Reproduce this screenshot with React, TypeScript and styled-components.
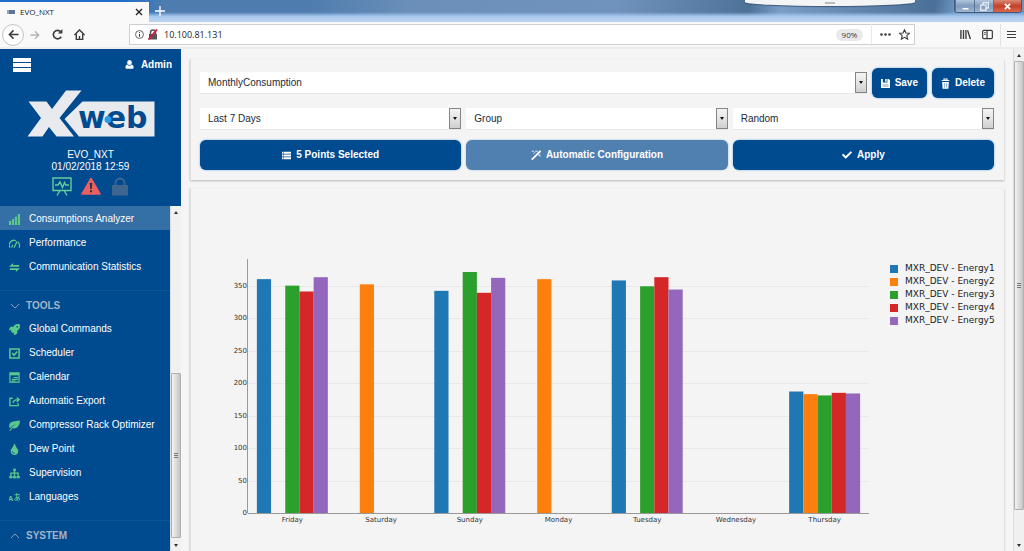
import React from 'react';
import styled, { createGlobalStyle } from 'styled-components';
import { FaCheck, FaRocket, FaTint } from 'react-icons/fa';

const navy = '#004a8f';
const green = '#5cc98c';
const uiFont = '"Liberation Sans", Arial, sans-serif';
const browserFont = '"Open Sans", "Noto Sans", sans-serif';
const chartFont = '"DejaVu Sans", Verdana, sans-serif';

const GlobalStyle = createGlobalStyle`
  *, *::before, *::after { box-sizing: border-box; }
  body { margin: 0; background: #f4f4f4; }
  button, select, input { font: inherit; margin: 0; }
  svg { display: block; flex: none; }
`;

const Window = styled.div`
  display: flex;
  flex-direction: column;
  height: 100vh;
  overflow: hidden;
  font: 10px/12px ${uiFont};
  color: #222;
`;

/* ---------- browser frame ---------- */

const TitleBar = styled.header`
  position: relative;
  display: flex;
  align-items: flex-end;
  flex: none;
  height: 22px;
  background:
    linear-gradient(to bottom, transparent 55%, #a9cbf2 75%, #bdd2ec),
    linear-gradient(100deg, #1f6fc9 0 12%, #4f7cae 16% 30%, #6a8fb9 40%, #7093bd 60%, #4d7197 73%, #7a9dc6 76%, #4a7098 91%, #6c94c0 93%);
`;

const Tab = styled.div`
  display: flex;
  align-items: center;
  gap: 5px;
  width: 149px;
  height: 20px;
  padding: 0 6px 0 7px;
  background: #f9f9fa;
  font: 8px/12px ${browserFont};
`;

const Favicon = styled.span`
  width: 8px;
  height: 4px;
  background: linear-gradient(90deg, #9aa6b8 30%, #5d7698 30%);
`;

const PlainButton = styled.button`
  display: flex;
  align-items: center;
  justify-content: center;
  padding: 0;
  border: 0;
  background: none;
  color: inherit;
`;

const TabClose = styled(PlainButton)`
  margin-left: auto;
`;

const NewTab = styled(PlainButton)`
  width: 22px;
  height: 22px;
  color: #fff;
`;

const WindowControls = styled.div`
  display: flex;
  align-self: flex-start;
  margin-left: auto;
  margin-right: 2px;
  border: 1px solid #40597a;
  border-top: 0;
  border-radius: 0 0 4px 4px;
  overflow: hidden;
`;

const WindowButton = styled(PlainButton)<{ $close?: boolean }>`
  width: ${p => (p.$close ? 28 : 19)}px;
  height: 12px;
  color: #fff;
  border-left: 1px solid #5a7595;
  background: ${p =>
    p.$close
      ? 'linear-gradient(#d98a78, #c2402a 50%, #d9694c)'
      : 'linear-gradient(#b3c5db, #7f9abb 50%, #9db6d3)'};
`;

const SessionHandle = styled.div`
  position: absolute;
  top: 0;
  right: 109px;
  width: 170px;
  height: 6px;
  border-radius: 0 0 50% 50% / 0 0 4px 4px;
  background: #f2f4f6;
  box-shadow: 0 1px 1px #40597a;
  &::after {
    content: '';
    display: block;
    width: 10px;
    height: 2px;
    margin: 2px auto 0;
    background: #b9bdc2;
  }
`;

const Toolbar = styled.div`
  display: flex;
  align-items: center;
  flex: none;
  height: 27px;
  padding: 0 2px;
  background: #f9f9fa;
  border-bottom: 2px solid #ececec;
  color: #3b3b3d;
`;

const ToolButton = styled(PlainButton)`
  width: 22px;
  height: 22px;
`;

const BackButton = styled(ToolButton)`
  border: 1px solid #c4c4c6;
  border-radius: 50%;
  background: #fdfdfd;
`;

const AddressBar = styled.div`
  display: flex;
  align-items: center;
  flex: 1;
  height: 21px;
  margin: 0 39px;
  padding: 0 1px 0 5px;
  border: 1px solid #cfcfd1;
  background: #fff;
  font: 9px/12px ${browserFont};
`;

const AddressInput = styled.input`
  flex: 1;
  min-width: 0;
  padding: 0 0 0 6px;
  border: 0;
  background: none;
  color: #222;
  outline: 0;
`;

const ZoomLevel = styled.span`
  width: 27px;
  height: 12px;
  margin-right: 8px;
  border-radius: 6px;
  background: #e9e9eb;
  text-align: center;
  font-size: 8px;
`;

const AddressActions = styled.div`
  display: flex;
  align-items: center;
  gap: 1px;
  border-left: 1px solid #e8e8e8;
  padding-left: 4px;
  button { width: 18px; }
`;

const MenuButton = styled(ToolButton)`
  margin-left: 2px;
  border-left: 1px solid #e2e2e4;
`;

/* ---------- scroll bars ---------- */

const Track = styled.div`
  display: flex;
  flex-direction: column;
  flex: 0 0 11px;
  background: #f0f0f0;
  border-left: 1px solid #dcdcdc;
`;

const TrackArrow = styled.span<{ $down?: boolean }>`
  display: flex;
  align-items: center;
  justify-content: center;
  flex: 0 0 12px;
  &::before {
    content: '';
    border: 2px solid transparent;
    ${p => (p.$down ? 'border-top: 3px solid #333; border-bottom: 0;' : 'border-bottom: 3px solid #333; border-top: 0;')}
  }
`;

const TrackGap = styled.span<{ $share: number }>`
  flex: ${p => p.$share} 0 0;
`;

const Thumb = styled.span<{ $share: number }>`
  display: flex;
  align-items: center;
  justify-content: center;
  flex: ${p => p.$share} 0 0;
  border: 1px solid #b0b0b0;
  border-radius: 1px;
  background: linear-gradient(90deg, #f3f3f3, #dcdcdc 50%, #c3c3c3);
  &::before {
    content: '';
    width: 4px;
    height: 5px;
    background: repeating-linear-gradient(#777 0 1px, transparent 1px 2px);
  }
`;

const ScrollTrack = ({ before, thumb, after }: { before: number; thumb: number; after: number }) => (
  <Track aria-hidden="true">
    <TrackArrow />
    <TrackGap $share={before} />
    <Thumb $share={thumb} />
    <TrackGap $share={after} />
    <TrackArrow $down />
  </Track>
);

/* ---------- side bar ---------- */

const Page = styled.div`
  display: flex;
  flex: 1;
  min-height: 0;
`;

const Sidebar = styled.aside`
  display: flex;
  flex-direction: column;
  flex: 0 0 181px;
  background: ${navy};
  color: #fff;
`;

const SidebarTop = styled.div`
  display: flex;
  align-items: center;
  justify-content: space-between;
  height: 31px;
  padding: 0 9px 0 13px;
`;

const UserLink = styled.a`
  display: flex;
  align-items: center;
  gap: 7px;
  color: #fff;
  font-weight: bold;
  text-decoration: none;
`;

const Identity = styled.div`
  display: flex;
  flex-direction: column;
  align-items: center;
  padding: 10px 0;
`;

const DeviceInfo = styled.div`
  margin: 12px 0 4px;
  text-align: center;
`;

const StatusIcons = styled.div`
  display: flex;
  gap: 9px;
`;

const MenuArea = styled.div`
  display: flex;
  flex: 1;
  min-height: 0;
`;

const Menu = styled.nav`
  flex: 1;
  min-width: 0;
  overflow: hidden;
`;

const MenuLink = styled.a<{ $active?: boolean }>`
  display: flex;
  align-items: center;
  gap: 9px;
  height: 24px;
  padding: 2px 0 0 9px;
  color: #fff;
  text-decoration: none;
  white-space: nowrap;
  background: ${p => (p.$active ? '#346fa6' : 'transparent')};
  svg { color: ${green}; }
`;

const MenuHeading = styled.h2`
  display: flex;
  align-items: center;
  gap: 6px;
  height: 26px;
  margin: 12px 0 0;
  padding: 4px 0 0 10px;
  border-top: 1px solid #0d5596;
  font-size: 10px;
  color: #a3b4c6;
`;

/* ---------- content ---------- */

const Main = styled.main`
  display: flex;
  flex-direction: column;
  gap: 8px;
  flex: 1;
  min-width: 0;
  padding: 10px 9px 0;
  background: #f5f5f5;
`;

const Card = styled.section`
  background: #f4f4f4;
  border-left: 1px solid #dedede;
  box-shadow: 0 1px 2px #b5b5b5;
`;

const FilterCard = styled(Card)`
  display: flex;
  flex-direction: column;
  gap: 10px;
  padding: 9px 10px 10px 9px;
`;

const PresetRow = styled.div`
  display: flex;
  align-items: center;
  gap: 5px;
`;

const ThreeColumns = styled.div`
  display: grid;
  grid-template-columns: repeat(3, 1fr);
  gap: 5px;
`;

const SelectBox = styled.div`
  display: grid;
  flex: 1;
  height: 22px;
  background: #fff;
  border-bottom: 1px solid #e6e6e6;
`;

const NativeSelect = styled.select`
  grid-area: 1 / 1;
  appearance: none;
  padding: 0 16px 0 8px;
  border: 0;
  border-radius: 0;
  background: none;
  color: #222b3a;
`;

const SelectArrow = styled.span`
  grid-area: 1 / 1;
  justify-self: end;
  display: flex;
  align-items: center;
  justify-content: center;
  width: 12px;
  border: 1px solid #858585;
  background: linear-gradient(#f4f4f4, #e4e4e4 50%, #cfcfcf);
  pointer-events: none;
  &::before {
    content: '';
    border: 2px solid transparent;
    border-top: 3px solid #111;
    border-bottom: 0;
  }
`;

const ActionButton = styled.button<{ $muted?: boolean }>`
  display: flex;
  align-items: center;
  justify-content: center;
  gap: 5px;
  height: 30px;
  padding: 0 9px;
  border: 0;
  border-radius: 6px;
  background: ${p => (p.$muted ? '#4f80b0' : navy)};
  box-shadow: 0 0 2px ${p => (p.$muted ? '#8fb4d6' : '#5b9bd4')};
  color: #fff;
  font-weight: bold;
`;

const ChartCard = styled(Card)`
  display: flex;
  flex: 1;
  min-height: 0;
  padding: 71px 0 0 57px;
`;

const Plot = styled.svg`
  flex: 1;
  min-width: 0;
  height: 275px;
  overflow: visible;
  font: 7px ${chartFont};
  fill: #333;
`;

const Legend = styled.ul`
  flex: 0 0 135px;
  margin: 0;
  padding: 3px 0 0 21px;
  list-style: none;
  font: 9px/13px ${chartFont};
  white-space: nowrap;
  li {
    display: flex;
    align-items: center;
    gap: 7px;
  }
`;

const Swatch = styled.span<{ $color: string }>`
  width: 8px;
  height: 8px;
  background: ${p => p.$color};
`;

/* ---------- icons ---------- */

const Stroke = ({ size, width = 1, children }: { size: number; width?: number; children: React.ReactNode }) => (
  <svg width={size} height={size} viewBox="0 0 12 12" fill="none" stroke="currentColor" strokeWidth={width}>
    {children}
  </svg>
);

const Solid = ({ size, children }: { size: number; children: React.ReactNode }) => (
  <svg width={size} height={size} viewBox="0 0 12 12" fill="currentColor">
    {children}
  </svg>
);

const StatsIcon = () => (
  <Solid size={11}>
    <path d="M0 7.500h2.300V12H0zM3.200 5.500h2.300V12H3.200zM6.400 3h2.300v9H6.400zM9.600 0H12v12H9.600z" />
  </Solid>
);
const GaugeIcon = () => (
  <Stroke size={11} width={1.4}>
    <path d="M1 10.500A5.200 5.200 0 0 1 7.500 3M9.800 4.500a5.200 5.200 0 0 1 1.200 6M5.500 10.500L9 3.500M3.200 10.500a3 3 0 0 1 1-2.800" />
  </Stroke>
);
const ExchangeIcon = () => (
  <Solid size={11}>
    <path d="M4.500 1v2.300H11v1.900H0zM7.500 11V8.700H1V6.800h11z" />
  </Solid>
);
const CheckBoxIcon = () => (
  <Stroke size={11} width={1.7}>
    <path d="M1 1h10v10H1zM3.500 5.500l2 2.500L9 3.800" />
  </Stroke>
);
const CalendarIcon = () => (
  <Stroke size={11} width={1.3}>
    <path d="M1 1h10v10H1z" />
    <path d="M1 2.300h10" strokeWidth="2.600" />
    <path d="M5 6h5M3 8h7M3 10h4" />
  </Stroke>
);
const ExportIcon = () => (
  <Stroke size={11} width={1.5}>
    <path d="M4 2.500H1v8h9V8M4.500 7.500c0-2.500 1.500-3.500 6-3.500M8.500 1.500L11 4 8.500 6.500" />
  </Stroke>
);
const LeafIcon = () => (
  <Solid size={11}>
    <path d="M.500 4.500C2 1.500 6 1 12 .500c-.3 5-2.500 9.500-8.500 8.500L1.500 12 .500 11.500C2 8.500 4 6.500 7.500 4.500 4.500 5.500 2.500 7 1 9 .200 7.500 0 6 .500 4.500z" />
  </Solid>
);
const TreeIcon = () => (
  <Stroke size={11} width={1.4}>
    <path d="M6 1v8M2 9V5.500h8V9" />
    <path d="M.500 9h3v2h-3zM4.500 9h3v2h-3zM8.500 9h3v2h-3z" fill="currentColor" strokeWidth=".6" />
    <path d="M4.800 1h2.400v2H4.800z" fill="currentColor" strokeWidth=".6" />
  </Stroke>
);
const LanguageIcon = () => (
  <Stroke size={11} width={1}>
    <text x="-1" y="10" fontSize="8" fontWeight="bold" fill="currentColor" stroke="none">A</text>
    <path d="M6 3h6M8.500 1v5.500q0 3 2 3.500M11 4.500c-.5 3-2.500 4.500-4 4.500s-1-2.500 1.500-3 3.500 1 3 3" />
  </Stroke>
);
const Chevron = ({ up }: { up?: boolean }) => (
  <Stroke size={10}>
    <path d={up ? 'M1 8.500l5-5 5 5' : 'M1 3.500l5 5 5-5'} />
  </Stroke>
);
const UserIcon = () => (
  <Solid size={9}>
    <path d="M6 0a3 3.200 0 0 1 0 6.800A3 3.200 0 0 1 6 0zM3 6q1.200 1.700 3 1.700T9 6q2.500.8 2.500 4 0 1.800-1.500 1.800H2Q.500 11.800.500 10 .500 6.800 3 6z" />
  </Solid>
);
const SaveIcon = () => (
  <Solid size={9}>
    <path fillRule="evenodd" d="M0 0h2.500v4.500h6V0H10.500L12 1.500V12H0zM5.500 0h2v3.500h-2zM2.500 7h7v3.500h-7z" />
    <path d="M2.500 7h7v3.500h-7z" opacity=".8" />
  </Solid>
);
const BinIcon = () => (
  <svg width="9" height="11" viewBox="0 0 12 14" fill="none" stroke="currentColor">
    <path d="M1 3h10M4 2.500V1h4v1.500" strokeWidth="1.500" />
    <path d="M1.500 5h9L9.800 14H2.200z" fill="currentColor" stroke="none" />
    <path d="M4.500 6.500l.2 6M7.500 6.500l-.2 6" stroke={navy} strokeWidth=".6" />
  </svg>
);
const ListIcon = () => (
  <Solid size={9}>
    <path d="M0 1h2v2.600H0zM2.600 1H12v2.600H2.600zM0 4.700h2v2.600H0zM2.600 4.700H12v2.600H2.600zM0 8.400h2V11H0zM2.600 8.400H12V11H2.600z" />
  </Solid>
);
const WandIcon = () => (
  <Stroke size={10} width={1}>
    <path d="M1 11.500L11.500 1" strokeWidth="2.200" />
    <path d="M1 1.500h2.500M5 1.500h3M3 4.500l2-2M10.500 5v2M8.500 5.500l2.500 2.500" />
  </Stroke>
);

const Logo = () => (
  <svg width="128" height="47" viewBox="0 0 128 47" role="img" aria-label="Xweb">
    <path
      fill="#e8eaee"
      d="M1.500 11.500H19.500L25 19 39 .500H54.500L32.500 28 47 46.500H29.500L22 37 15.500 46.500H.500L14 28z"
    />
    <path fill="#e8eaee" d="M55.500 11.500H127.500V46.500H52L37.500 29z" />
    <text x="51" y="38" fontFamily="DejaVu Sans, sans-serif" fontWeight="bold" fontSize="30" fill={navy}>
      web
    </text>
    <circle cx="81" cy="29.500" r="3.500" fill="#2b9ae8" />
  </svg>
);

const MonitorIcon = () => (
  <svg width="20" height="19" viewBox="0 0 20 19" fill="none" stroke="#63cf9b" strokeWidth="1.400">
    <path d="M1 1h18v12.500H1zM8 13.500l-3 5M12 13.500l3 5M3 8h3l2-3 2.500 5.500 2-5 1.200 2.500H17" />
  </svg>
);
const AlertIcon = () => (
  <svg width="20" height="19" viewBox="0 0 20 19">
    <path d="M10 1.500L19 17H1z" fill="#ea5f5f" stroke="#ea5f5f" strokeWidth="1.500" strokeLinejoin="round" />
    <path d="M8.800 6h2.400l-.4 6H9.200zM9 13.300h2v2H9z" fill="#23344f" />
  </svg>
);
const LockIcon = () => (
  <svg width="20" height="19" viewBox="0 0 20 19">
    <path d="M5.500 8V6a4.500 4.500 0 0 1 9 0v2" fill="none" stroke="#3d6590" strokeWidth="2" />
    <path d="M2 8h16v10.500H2z" fill="#3d6590" />
  </svg>
);

/* ---------- data ---------- */

const tools = [
  { label: 'Global Commands', icon: <FaRocket size={11} /> },
  { label: 'Scheduler', icon: <CheckBoxIcon /> },
  { label: 'Calendar', icon: <CalendarIcon /> },
  { label: 'Automatic Export', icon: <ExportIcon /> },
  { label: 'Compressor Rack Optimizer', icon: <LeafIcon /> },
  { label: 'Dew Point', icon: <FaTint size={11} /> },
  { label: 'Supervision', icon: <TreeIcon /> },
  { label: 'Languages', icon: <LanguageIcon /> },
];

const colors = ['#1f77b4', '#ff7f0e', '#2ca02c', '#d62728', '#9467bd'];

const days: { name: string; values: (number | null)[] }[] = [
  { name: 'Friday', values: [360, null, 350, 341, 363] },
  { name: 'Saturday', values: [null, 352, null, null, null] },
  { name: 'Sunday', values: [342, null, 371, 339, 362] },
  { name: 'Monday', values: [null, 360, null, null, null] },
  { name: 'Tuesday', values: [358, null, 349, 363, 344] },
  { name: 'Wednesday', values: [null, null, null, null, null] },
  { name: 'Thursday', values: [187, 183, 181, 185, 184] },
];

const plotHeight = 254;
const maxValue = 391;
const yOf = (v: number) => plotHeight - (v / maxValue) * plotHeight;
const dayShare = 100 / days.length;
const barShare = (dayShare * 0.8) / colors.length;

const ConsumptionChart = () => (
  <Plot role="img" aria-label="Energy consumption per day">
    {[0, 50, 100, 150, 200, 250, 300, 350].map(v => (
      <g key={v}>
        {v > 0 && <line x1="0" x2="100%" y1={Math.round(yOf(v)) + 0.5} y2={Math.round(yOf(v)) + 0.5} stroke="#e8e8e8" />}
        <text x="-1" y={yOf(v)} textAnchor="end" dominantBaseline="central">{v}</text>
      </g>
    ))}
    {days.map((day, d) => (
      <g key={day.name}>
        {day.values.map((v, i) =>
          v === null ? null : (
            <rect
              key={i}
              x={`${dayShare * (d + 0.1) + barShare * i}%`}
              y={yOf(v)}
              width={`${barShare}%`}
              height={plotHeight - yOf(v)}
              fill={colors[i]}
            />
          ),
        )}
        <text x={`${dayShare * (d + 0.5)}%`} y={plotHeight + 9} textAnchor="middle">{day.name}</text>
      </g>
    ))}
    <path d={`M-.5 0V${plotHeight}`} stroke="#999" />
    <line x1="0" x2="100%" y1={plotHeight + 0.5} y2={plotHeight + 0.5} stroke="#999" />
  </Plot>
);

const Select = ({ label, value }: { label: string; value: string }) => (
  <SelectBox>
    <NativeSelect aria-label={label} defaultValue={value}>
      <option>{value}</option>
    </NativeSelect>
    <SelectArrow />
  </SelectBox>
);

export default function App() {
  return (
    <Window>
      <GlobalStyle />
      <TitleBar>
        <Tab>
          <Favicon />
          EVO_NXT
          <TabClose aria-label="Close tab">
            <Stroke size={8} width={2}><path d="M1.500 1.500l9 9M10.500 1.500l-9 9" /></Stroke>
          </TabClose>
        </Tab>
        <NewTab aria-label="New tab">
          <Stroke size={10} width={1.6}><path d="M6 0v12M0 6h12" /></Stroke>
        </NewTab>
        <SessionHandle />
        <WindowControls>
          <WindowButton aria-label="Minimize">
            <Stroke size={9} width={2}><path d="M2 9h8" /></Stroke>
          </WindowButton>
          <WindowButton aria-label="Restore">
            <Stroke size={9} width={1.4}><path d="M4 4V1h7v7H8M1 4h7v7H1z" /></Stroke>
          </WindowButton>
          <WindowButton aria-label="Close" $close>
            <Stroke size={7} width={3}><path d="M1.500 1.500l9 9M10.500 1.500l-9 9" /></Stroke>
          </WindowButton>
        </WindowControls>
      </TitleBar>

      <Toolbar>
        <BackButton aria-label="Back">
          <Stroke size={11} width={1.6}><path d="M11.500 6H1.500M6 1.500L1.500 6 6 10.500" /></Stroke>
        </BackButton>
        <ToolButton aria-label="Forward">
          <svg width="10" height="10" viewBox="0 0 12 12" fill="none" stroke="#b4b4b6" strokeWidth="1.600">
            <path d="M.500 6h10M6 1.500L10.500 6 6 10.500" />
          </svg>
        </ToolButton>
        <ToolButton aria-label="Reload">
          <Stroke size={11} width={1.8}>
            <path d="M10 8.500A4.600 4.600 0 1 1 9.500 3" />
            <path d="M11.300 0v5H6.500z" fill="currentColor" stroke="none" />
          </Stroke>
        </ToolButton>
        <ToolButton aria-label="Home">
          <Stroke size={11} width={1.5}><path d="M.500 6.500L6 1l5.500 5.500M2.500 5.500v5.800h7V5.500M6 11V7.500" /></Stroke>
        </ToolButton>
        <AddressBar>
          <Stroke size={9}>
            <circle cx="6" cy="6" r="5.300" />
            <path d="M6 5.200V9M6 2.800v1.200" strokeWidth="1.400" />
          </Stroke>
          <svg width="14" height="11" viewBox="0 0 14 11" fill="none">
            <path d="M6.500 5V3.500a2.500 2.500 0 0 1 5 0V5" stroke="#555" strokeWidth="1.500" />
            <path d="M5 5h8v5.500H5z" fill="#555" />
            <path d="M4.500 10.500L13 .500" stroke="#d5173f" strokeWidth="1.800" />
          </svg>
          <AddressInput aria-label="Address" defaultValue="10.100.81.131" />
          <ZoomLevel>90%</ZoomLevel>
          <AddressActions>
            <ToolButton aria-label="Page actions">
              <svg width="11" height="3" viewBox="0 0 11 3" fill="currentColor">
                <circle cx="1.500" cy="1.500" r="1.300" /><circle cx="5.500" cy="1.500" r="1.300" /><circle cx="9.500" cy="1.500" r="1.300" />
              </svg>
            </ToolButton>
            <ToolButton aria-label="Bookmark">
              <Stroke size={11} width={1.2}>
                <path d="M6 .800l1.600 3.500 3.800.400-2.900 2.500.9 3.900L6 9.100l-3.400 2 .9-3.900L.600 4.700l3.800-.400z" />
              </Stroke>
            </ToolButton>
          </AddressActions>
        </AddressBar>
        <ToolButton aria-label="Library">
          <Stroke size={11} width={1.5}><path d="M1 1v10M3.800 1v10M6.500 1v10M8.300 1.500l3 9.500" /></Stroke>
        </ToolButton>
        <ToolButton aria-label="Sidebars">
          <Stroke size={11} width={1.3}><path d="M2 1.500h8q1.300 0 1.300 1.300v6.400q0 1.300-1.300 1.300H2Q.700 10.500.700 9.200V2.800Q.700 1.500 2 1.500zM5.500 1.500v9M2.500 4h1.500M2.500 6h1.500" /></Stroke>
        </ToolButton>
        <MenuButton aria-label="Open menu">
          <Stroke size={9} width={1.5}><path d="M0 2h12M0 6h12M0 10h12" /></Stroke>
        </MenuButton>
      </Toolbar>

      <Page>
        <Sidebar>
          <SidebarTop>
            <PlainButton aria-label="Toggle menu">
              <svg width="18" height="14" viewBox="0 0 18 14" fill="currentColor">
                <path d="M0 0h18v4H0zM0 5h18v4H0zM0 10h18v4H0z" />
              </svg>
            </PlainButton>
            <UserLink href="#user"><UserIcon />Admin</UserLink>
          </SidebarTop>
          <Identity>
            <Logo />
            <DeviceInfo>
              <div>EVO_NXT</div>
              <time dateTime="2018-02-01T12:59">01/02/2018 12:59</time>
            </DeviceInfo>
            <StatusIcons>
              <MonitorIcon />
              <AlertIcon />
              <LockIcon />
            </StatusIcons>
          </Identity>
          <MenuArea>
            <Menu>
              <MenuLink href="#consumptions" $active><StatsIcon />Consumptions Analyzer</MenuLink>
              <MenuLink href="#performance"><GaugeIcon />Performance</MenuLink>
              <MenuLink href="#communication"><ExchangeIcon />Communication Statistics</MenuLink>
              <MenuHeading><Chevron />TOOLS</MenuHeading>
              {tools.map(tool => (
                <MenuLink key={tool.label} href="#tools">{tool.icon}{tool.label}</MenuLink>
              ))}
              <MenuHeading><Chevron up />SYSTEM</MenuHeading>
            </Menu>
            <ScrollTrack before={156} thumb={165} after={1} />
          </MenuArea>
        </Sidebar>

        <Main>
          <FilterCard>
            <PresetRow>
              <Select label="Preset" value="MonthlyConsumption" />
              <ActionButton><SaveIcon />Save</ActionButton>
              <ActionButton><BinIcon />Delete</ActionButton>
            </PresetRow>
            <ThreeColumns>
              <Select label="Period" value="Last 7 Days" />
              <Select label="Grouping" value="Group" />
              <Select label="Order" value="Random" />
            </ThreeColumns>
            <ThreeColumns>
              <ActionButton><ListIcon />5 Points Selected</ActionButton>
              <ActionButton $muted><WandIcon />Automatic Configuration</ActionButton>
              <ActionButton><FaCheck size={10} />Apply</ActionButton>
            </ThreeColumns>
          </FilterCard>
          <ChartCard>
            <ConsumptionChart />
            <Legend>
              {colors.map((color, i) => (
                <li key={color}><Swatch $color={color} />MXR_DEV - Energy{i + 1}</li>
              ))}
            </Legend>
          </ChartCard>
        </Main>
        <ScrollTrack before={0} thumb={450} after={29} />
      </Page>
    </Window>
  );
}
